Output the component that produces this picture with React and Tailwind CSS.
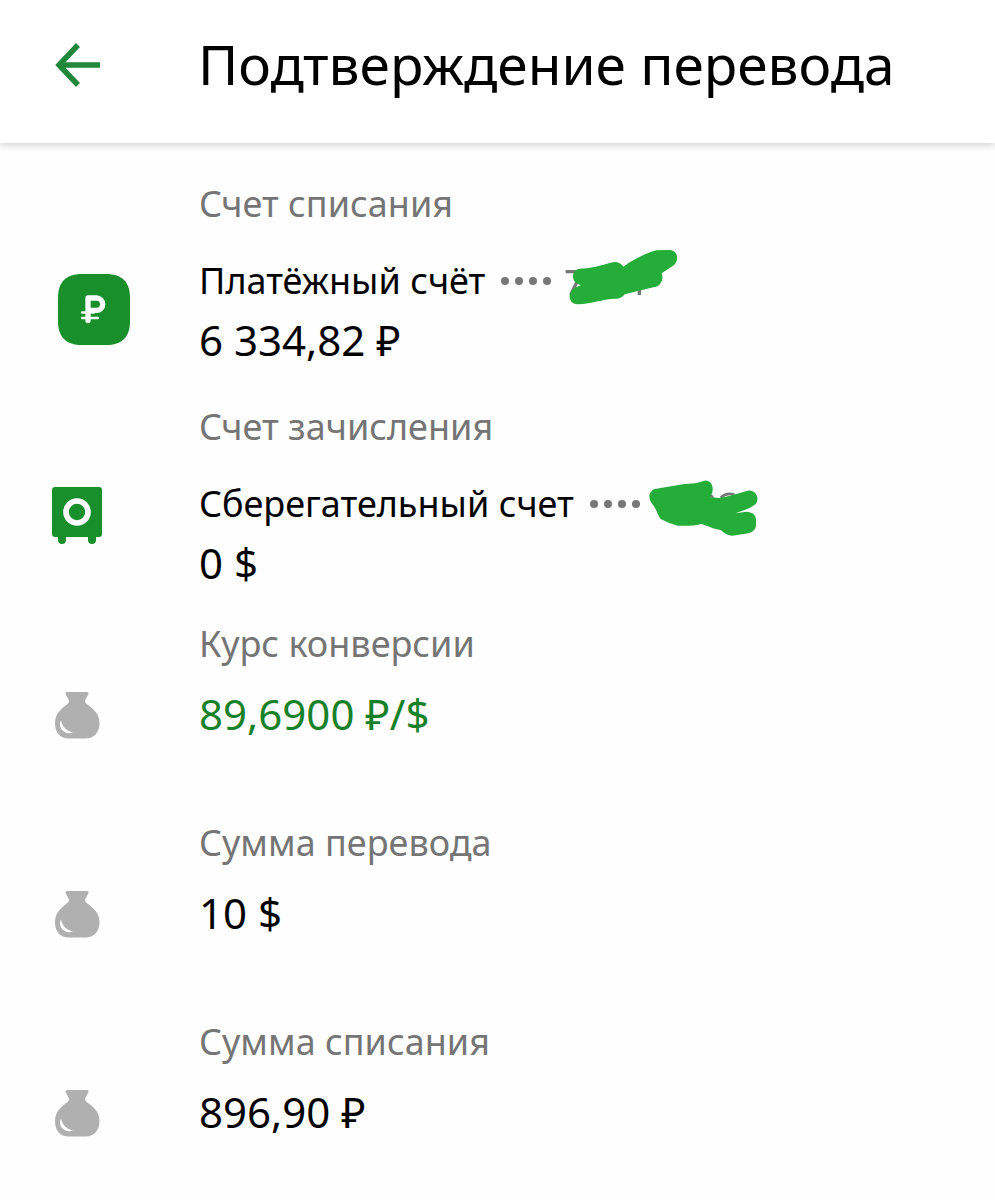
function BackArrow() {
  return (
    <svg viewBox="0 0 46 46" className="h-[46px] w-[46px]" fill="none" stroke="#21873a" strokeWidth="5.5" aria-hidden="true">
      <path d="M24 3 5 23l19 20M5 23h41" />
    </svg>
  )
}

function RubleIcon() {
  return (
    <svg viewBox="0 0 72 72" className="ml-[6px] h-[72px] w-[72px]" aria-hidden="true">
      <path d="M24 0h24C64 0 72 8 72 24v23c0 16-8 24-24 24H24C8 71 0 63 0 47V24C0 8 8 0 24 0Z" fill="#198f2b" />
      <g fill="none" stroke="#fff" strokeLinecap="round">
        <path d="M30 46.500V24h8.500a6.200 6.200 0 0 1 0 12.400H30" strokeWidth="5.300" strokeLinejoin="round" />
        <path d="M24 38.500h12M24 44h16" strokeWidth="2.300" />
      </g>
    </svg>
  )
}

function SafeIcon() {
  return (
    <svg viewBox="0 0 50 58" className="h-[58px] w-[50px]" aria-hidden="true">
      <g fill="#198f2b">
        <rect width="50" height="50" rx="3" />
        <path d="M6 49h8v4a4 4 0 0 1-8 0zM36 49h8v4a4 4 0 0 1-8 0z" />
      </g>
      <circle cx="25" cy="25" r="11" fill="none" stroke="#fff" strokeWidth="5.6" />
    </svg>
  )
}

function BagIcon() {
  return (
    <svg viewBox="0 0 46 48" className="h-[48px] w-[46px]" aria-hidden="true">
      <path
        d="M13 1h20q2 0 1.500 2L31 9.500q-.5 1.500 1 3C38 17 45.500 22 45.500 32c0 10-6 15.500-14 15.500h-17C6.500 47.500 1 42 1 32 1 22 8.500 17 14 12.500q1.500-1.500 1-3L11.500 3Q11 1 13 1Z"
        fill="#b0b0b0"
      />
      <path d="M7 29.500C8.500 36 12.500 40 19 41.500 11 44.500 3 37 7 29.500Z" fill="#fff" />
    </svg>
  )
}

function Dots() {
  return (
    <span className="ml-[16px] flex gap-1.5" aria-hidden="true">
      <span className="size-2 rounded-full bg-[#777]" />
      <span className="size-2 rounded-full bg-[#777]" />
      <span className="size-2 rounded-full bg-[#777]" />
      <span className="size-2 rounded-full bg-[#777]" />
    </span>
  )
}

function DebitScribble() {
  return (
    <svg viewBox="225 45 342 180" className="ml-[14px] h-[60px] w-[114px] overflow-visible" aria-hidden="true">
      <path d="M227 107h40M262 135l-20 42M448 160v17" fill="none" stroke="#777" strokeWidth="10" />
      <path
        d="M268 98C300 98 335 88 362 80C378 74 392 80 400 92C430 70 465 52 500 43L540 42C566 44 568 78 548 90L515 112C522 132 512 151 490 154L404 175C394 188 384 189 370 188C335 190 310 203 262 205C242 204 235 185 241 172C246 158 258 154 272 148L260 142C245 132 243 104 268 98Z"
        fill="#24ad39"
      />
    </svg>
  )
}

function CreditScribble() {
  return (
    <svg viewBox="225 24 342 180" className="ml-[8px] h-[60px] w-[114px] overflow-visible" aria-hidden="true">
      <path d="M408 92q6-8 12 4M443 95q20-18 42-8" fill="none" stroke="#777" strokeWidth="8" />
      <path
        d="M250 68L335 54L368 52L395 44C414 42 424 62 417 82L412 94L440 96C470 90 495 82 524 74C548 70 562 98 548 114C532 128 508 134 488 142L520 137C538 138 548 145 549 160V178C548 190 540 198 526 202L478 209C462 208 452 200 444 192C422 190 402 178 384 174C365 180 340 179 314 179C295 174 278 166 262 158C254 146 250 132 244 122C236 112 230 104 229 92C229 80 238 69 250 68Z"
        fill="#24ad39"
      />
    </svg>
  )
}

function Account({ label, name, amount, icon, scribble }) {
  return (
    <section className="flex">
      <div className="w-[147px] shrink-0">{icon}</div>
      <div className="min-w-0 flex-1">
        <h2 className="text-[36px] leading-[48px] text-[#757575]">{label}</h2>
        <div className="mt-[23px] flex h-[60px] items-center">
          <span className="text-[36px] leading-[60px] whitespace-nowrap">{name}</span>
          <Dots />
          {scribble}
        </div>
        <p className="text-[42px] leading-[58px]">{amount}</p>
      </div>
    </section>
  )
}

function Amount({ label, children, green }) {
  return (
    <section className="flex">
      <div className="w-[147px] shrink-0 pt-[71px] pl-[2px]">
        <BagIcon />
      </div>
      <div className="min-w-0 flex-1">
        <h2 className="text-[36px] leading-[48px] text-[#757575]">{label}</h2>
        <p className={`mt-[17px] text-[42px] leading-[58px] ${green ? 'text-[#178128]' : ''}`}>{children}</p>
      </div>
    </section>
  )
}

export default function App() {
  return (
    <div className="min-h-screen bg-[#fefefe] font-['Noto_Sans',sans-serif] text-black">
      <header className="flex h-[143px] items-start bg-white pt-[24px] pl-[54px] shadow-[0_1px_8px_rgba(0,0,0,0.22)]">
        <button type="button" aria-label="Назад" className="mt-[18px] w-[144px] shrink-0">
          <BackArrow />
        </button>
        <h1 className="text-[55px] leading-[80px] whitespace-nowrap">Подтверждение перевода</h1>
      </header>

      <main className="pt-[37px] pl-[52px]">
        <Account
          label="Счет списания"
          name="Платёжный счёт"
          amount="6 334,82 ₽"
          icon={<div className="pt-[94px]"><RubleIcon /></div>}
          scribble={<DebitScribble />}
        />
        <div className="mt-[34px]">
          <Account
            label="Счет зачисления"
            name="Сберегательный счет"
            amount="0 $"
            icon={<div className="pt-[84px]"><SafeIcon /></div>}
            scribble={<CreditScribble />}
          />
        </div>
        <div className="mt-[28px] flex flex-col gap-[76px]">
          <Amount label="Курс конверсии" green>89,6900 ₽/$</Amount>
          <Amount label="Сумма перевода">10 $</Amount>
          <Amount label="Сумма списания">896,90 ₽</Amount>
        </div>
      </main>
    </div>
  )
}
